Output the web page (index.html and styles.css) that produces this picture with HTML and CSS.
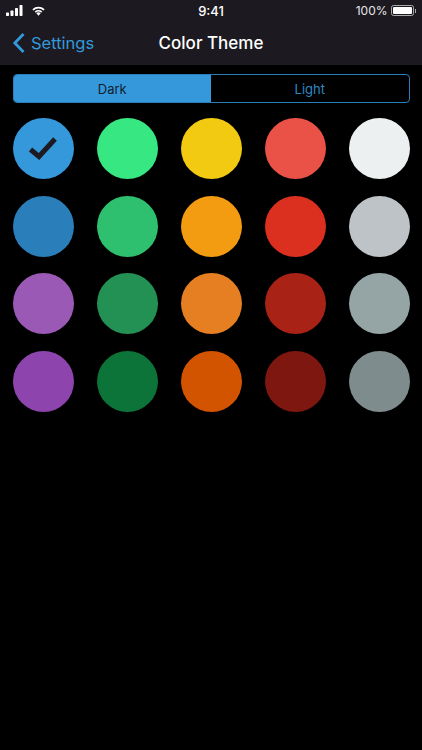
FILE: index.html
```html
<!DOCTYPE html>
<html lang="en">
<head>
    <meta charset="UTF-8">
    <meta name="viewport" content="width=device-width, initial-scale=1.0">
    <title>Color Theme</title>
    <link rel="stylesheet" href="styles.css">
</head>
<body>
    <header class="top">
        <div class="status">
            <div class="status-left">
                <svg class="signal" width="17" height="11" viewBox="0 0 17 11">
                    <rect x="0" y="7.5" width="3" height="3.5" rx="0.7"/>
                    <rect x="4.5" y="5.5" width="3" height="5.5" rx="0.7"/>
                    <rect x="9" y="3" width="3" height="8" rx="0.7"/>
                    <rect x="13.5" y="0" width="3" height="11" rx="0.7"/>
                </svg>
                <svg class="wifi" width="15" height="11" viewBox="0 0 16 12">
                    <path d="M8 11.6 L5.7 9 A3.4 3.4 0 0 1 10.3 9 Z"/>
                    <path d="M3.9 7.2 A6 6 0 0 1 12.1 7.2 L10.9 8.4 A4.3 4.3 0 0 0 5.1 8.4 Z"/>
                    <path d="M1.3 4.6 A9.6 9.6 0 0 1 14.7 4.6 L13.4 5.9 A7.8 7.8 0 0 0 2.6 5.9 Z"/>
                </svg>
            </div>
            <div class="clock">9:41</div>
            <div class="status-right">
                <span>100%</span>
                <div class="battery"><div class="battery-fill"></div></div>
                <div class="battery-tip"></div>
            </div>
        </div>
        <nav class="nav">
            <a class="back" href="#">
                <svg width="14" height="22" viewBox="0 0 14 22">
                    <path d="M11.5 2 L2.8 11 L11.5 20" fill="none" stroke="#3498db" stroke-width="2.8"/>
                </svg>
                <span>Settings</span>
            </a>
            <h1>Color Theme</h1>
        </nav>
    </header>

    <main class="content">
        <div class="segment">
            <div class="seg on">Dark</div>
            <div class="seg">Light</div>
        </div>

        <div class="swatches">
            <div class="dot" style="background:#3498db">
                <svg width="32" height="26" viewBox="0 0 32 26">
                    <path d="M3.5 13.5 L12 20.5 L28 3" fill="none" stroke="#1c1a22" stroke-width="5"/>
                </svg>
            </div>
            <div class="dot" style="background:#37e882"></div>
            <div class="dot" style="background:#f3ca12"></div>
            <div class="dot" style="background:#eb5247"></div>
            <div class="dot" style="background:#ecf0f1"></div>

            <div class="dot" style="background:#2a7fba"></div>
            <div class="dot" style="background:#2fc06f"></div>
            <div class="dot" style="background:#f39c12"></div>
            <div class="dot" style="background:#db2f20"></div>
            <div class="dot" style="background:#bdc3c7"></div>

            <div class="dot" style="background:#9b59b6"></div>
            <div class="dot" style="background:#239154"></div>
            <div class="dot" style="background:#e67e22"></div>
            <div class="dot" style="background:#a92216"></div>
            <div class="dot" style="background:#95a5a6"></div>

            <div class="dot" style="background:#8e44ad"></div>
            <div class="dot" style="background:#0c7339"></div>
            <div class="dot" style="background:#d35400"></div>
            <div class="dot" style="background:#7e1710"></div>
            <div class="dot" style="background:#7f8c8d"></div>
        </div>
    </main>
</body>
</html>
```

FILE: styles.css
```css
* {
    margin: 0;
    padding: 0;
    box-sizing: border-box;
}

body {
    background-color: #000;
    color: #fff;
    font-family: Inter, "Liberation Sans", sans-serif;
    height: 750px;
    overflow: hidden;
}

/* Top bar */
.top {
    background-color: #1c1a20;
    height: 65px;
}

.status {
    display: grid;
    grid-template-columns: 1fr auto 1fr;
    align-items: center;
    height: 21px;
    padding: 0 6px 0 6px;
    font-size: 13px;
}

.status-left {
    display: flex;
    align-items: center;
    gap: 8px;
}

.status-left svg {
    fill: #fff;
}

.clock {
    font-weight: 500;
}

.status-right {
    display: flex;
    align-items: center;
    justify-content: flex-end;
    color: #e6e6e8;
    font-size: 12px;
}

.battery {
    width: 23px;
    height: 11px;
    border: 1px solid #aaa;
    border-radius: 2.5px;
    padding: 1px;
    margin-left: 3px;
}

.battery-fill {
    background-color: #fff;
    height: 100%;
    border-radius: 1px;
}

.battery-tip {
    width: 1.5px;
    height: 4px;
    background-color: #aaa;
    margin-left: 1px;
}

.nav {
    display: flex;
    align-items: center;
    justify-content: center;
    position: relative;
    height: 44px;
}

.nav h1 {
    font-size: 17px;
    font-weight: 500;
}

.back {
    position: absolute;
    left: 12px;
    top: 11px;
    display: flex;
    align-items: center;
    gap: 5px;
    color: #3498db;
    font-size: 16.5px;
    text-decoration: none;
}

/* Dark / Light switch */
.content {
    padding: 9px 12.5px 0;
}

.segment {
    display: flex;
    height: 29px;
    border: 1px solid #2a7fba;
    border-radius: 4px;
    overflow: hidden;
}

.seg {
    flex: 1;
    display: flex;
    align-items: center;
    justify-content: center;
    font-size: 13px;
    color: #2f88c4;
}

.seg.on {
    background-color: #3498db;
    color: #14202c;
}

/* Colour swatches */
.swatches {
    display: grid;
    grid-template-columns: repeat(5, 61px);
    justify-content: space-between;
    row-gap: 16.5px;
    margin-top: 15.3px;
}

.dot {
    width: 61px;
    height: 61px;
    border-radius: 50%;
    display: flex;
    align-items: center;
    justify-content: center;
}
```
